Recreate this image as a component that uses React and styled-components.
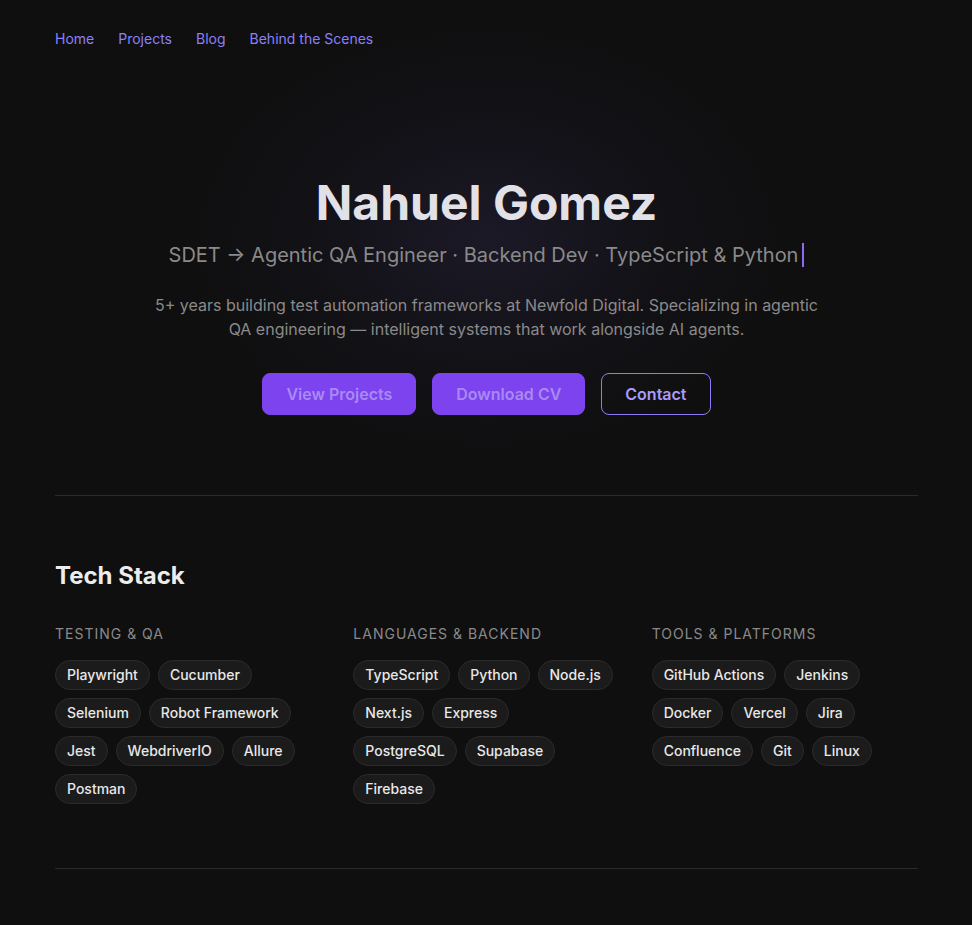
import React from 'react';
import styled, { createGlobalStyle } from 'styled-components';

const GlobalStyle = createGlobalStyle`
   * {
      box-sizing: border-box;
   }
   body {
      margin: 0;
      background: #0f0f0f;
      color: #e5e5e5;
      font-family: Inter, "Noto Sans", sans-serif;
      -webkit-font-smoothing: antialiased;
   }
`;

const Page = styled.div`
   max-width: 972px;
   margin: 0 auto;
   padding: 0 54px 0 55px;
`;

const Nav = styled.nav`
   display: flex;
   gap: 24px;
   padding-top: 29px;
   height: 49px;

   a {
      font-size: 14px;
      line-height: 20px;
      color: #8b80f9;
      text-decoration: none;
   }
`;

const Hero = styled.section`
   position: relative;
   display: flex;
   flex-direction: column;
   align-items: center;
   text-align: center;
   padding: 127px 0 80px;
   border-bottom: 1px solid #2a2a2a;

   /* soft violet glow behind the name */
   &::before {
      content: '';
      position: absolute;
      left: 50%;
      top: -40px;
      width: 640px;
      height: 460px;
      transform: translateX(-50%);
      background: radial-gradient(ellipse at 50% 50%, rgba(60, 50, 100, 0.28) 0%, rgba(40, 34, 70, 0.12) 40%, rgba(15, 15, 15, 0) 70%);
      pointer-events: none;
   }
`;

const Name = styled.h1`
   position: relative;
   margin: 0;
   font-size: 48px;
   line-height: 53px;
   font-weight: 700;
   color: #e3e1e8;
`;

const Tagline = styled.p`
   position: relative;
   margin: 12px 0 0;
   font-size: 20px;
   line-height: 28px;
   color: #8a8a8a;
   display: flex;
   align-items: center;
`;

const Caret = styled.span`
   display: inline-block;
   width: 2px;
   height: 24px;
   margin-left: 4px;
   background: #8b6cf0;
`;

const Intro = styled.p`
   position: relative;
   margin: 24px 0 0;
   max-width: 672px;
   font-size: 16px;
   line-height: 24px;
   color: #8a8a8a;
`;

const Actions = styled.div`
   position: relative;
   display: flex;
   gap: 16px;
   margin-top: 32px;
`;

const Button = styled.a`
   display: inline-flex;
   align-items: center;
   justify-content: center;
   height: 42px;
   padding: 0 23px;
   border-radius: 8px;
   font-size: 16px;
   font-weight: 600;
   text-decoration: none;
   background: ${p => (p.$outline ? 'transparent' : '#7c43ef')};
   border: 1px solid ${p => (p.$outline ? '#8b7cf6' : '#7c43ef')};
   color: ${p => (p.$outline ? '#a99bf8' : '#a98af5')};
`;

const Section = styled.section`
   padding: 64px 0;
   border-bottom: 1px solid #2a2a2a;
`;

const SectionTitle = styled.h2`
   margin: 0;
   font-size: 24px;
   line-height: 32px;
   font-weight: 700;
   color: #ececec;
`;

const Columns = styled.div`
   display: grid;
   grid-template-columns: repeat(3, 1fr);
   gap: 32px;
   margin-top: 32px;
`;

const Category = styled.h3`
   margin: 0 0 16px;
   font-size: 14px;
   line-height: 20px;
   font-weight: 400;
   letter-spacing: 1px;
   text-transform: uppercase;
   color: #8a8a8a;
`;

const Pills = styled.div`
   display: flex;
   flex-wrap: wrap;
   gap: 8px;
`;

const Pill = styled.span`
   display: inline-block;
   padding: 4px 11px;
   font-size: 14px;
   line-height: 20px;
   font-weight: 500;
   color: #e8e8e8;
   background: #1b1b1b;
   border: 1px solid #2b2b2b;
   border-radius: 999px;
`;

const stack = [
   {
      title: 'Testing & QA',
      items: ['Playwright', 'Cucumber', 'Selenium', 'Robot Framework', 'Jest', 'WebdriverIO', 'Allure', 'Postman'],
   },
   {
      title: 'Languages & Backend',
      items: ['TypeScript', 'Python', 'Node.js', 'Next.js', 'Express', 'PostgreSQL', 'Supabase', 'Firebase'],
   },
   {
      title: 'Tools & Platforms',
      items: ['GitHub Actions', 'Jenkins', 'Docker', 'Vercel', 'Jira', 'Confluence', 'Git', 'Linux'],
   },
];

const App = () => {
   return (
      <>
         <GlobalStyle />
         <Page>
            <Nav>
               <a href="#home">Home</a>
               <a href="#projects">Projects</a>
               <a href="#blog">Blog</a>
               <a href="#behind">Behind the Scenes</a>
            </Nav>

            <Hero>
               <Name>Nahuel Gomez</Name>
               <Tagline>
                  SDET → Agentic QA Engineer · Backend Dev · TypeScript &amp; Python
                  <Caret />
               </Tagline>
               <Intro>
                  5+ years building test automation frameworks at Newfold Digital. Specializing in agentic
                  QA engineering — intelligent systems that work alongside AI agents.
               </Intro>
               <Actions>
                  <Button href="#projects">View Projects</Button>
                  <Button href="#cv">Download CV</Button>
                  <Button href="#contact" $outline>Contact</Button>
               </Actions>
            </Hero>

            <Section>
               <SectionTitle>Tech Stack</SectionTitle>
               <Columns>
                  {stack.map(group => (
                     <div key={group.title}>
                        <Category>{group.title}</Category>
                        <Pills>
                           {group.items.map(item => (
                              <Pill key={item}>{item}</Pill>
                           ))}
                        </Pills>
                     </div>
                  ))}
               </Columns>
            </Section>
         </Page>
      </>
   );
};

export default App;
